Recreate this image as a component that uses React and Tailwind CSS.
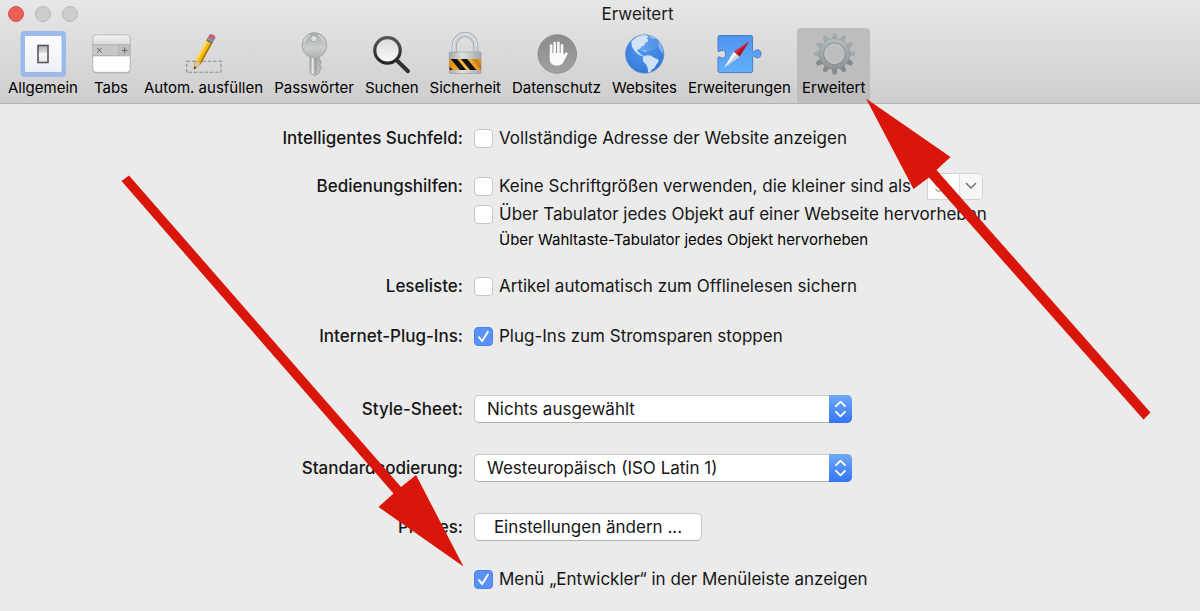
import React from "react";

const Svg = ({ children }) => (
  <svg viewBox="0 0 48 48" className="-mx-2 h-12 w-12 shrink-0" aria-hidden="true">
    {children}
  </svg>
);

const GeneralIcon = () => (
  <Svg>
    <defs>
      <linearGradient id="plate" x1="0" y1="0" x2="0" y2="1">
        <stop offset="0" stopColor="#fdfdff" />
        <stop offset="1" stopColor="#edf0f7" />
      </linearGradient>
      <linearGradient id="rocker" x1="0" y1="0" x2="0" y2="1">
        <stop offset="0" stopColor="#b4b4b6" />
        <stop offset="0.4" stopColor="#d8d8da" />
        <stop offset="0.45" stopColor="#fafafa" />
        <stop offset="1" stopColor="#e6e6e8" />
      </linearGradient>
    </defs>
    <rect x="1.5" y="1" width="45.5" height="46" rx="4" fill="#9bbaee" />
    <rect x="5.5" y="5.5" width="37.5" height="37" rx="1.5" fill="url(#plate)" stroke="#86a6dc" strokeWidth="0.6" />
    <rect x="19" y="15.5" width="10" height="17" fill="url(#rocker)" stroke="#58585b" strokeWidth="1.6" />
  </Svg>
);

const TabsIcon = () => (
  <Svg>
    <defs>
      <linearGradient id="tabTop" x1="0" y1="0" x2="0" y2="1">
        <stop offset="0" stopColor="#f4f4f4" />
        <stop offset="1" stopColor="#d9d9d9" />
      </linearGradient>
    </defs>
    <rect x="5.5" y="4.8" width="38" height="38.4" rx="4" fill="#a5a5a5" />
    <rect x="5.8" y="4.8" width="37.4" height="37.4" rx="3.6" fill="#fff" />
    <path d="M5.8 15V8.4a3.6 3.6 0 0 1 3.6-3.6h30.2a3.6 3.6 0 0 1 3.6 3.6V15z" fill="url(#tabTop)" />
    <rect x="5.8" y="14.6" width="37.4" height="11.4" fill="#c7c7c7" />
    <path d="M5.8 14.8h37.4M5.8 25.8h37.4M31.8 14.8v11" stroke="#a9a9a9" strokeWidth="0.9" />
    <rect x="32.3" y="15.2" width="10.9" height="10.2" fill="#bdbdbd" />
    <path d="M10.2 18l4.4 4.6M14.6 18l-4.4 4.6M34.6 20.4h6M37.6 17.4v6" stroke="#666" strokeWidth="1" />
    <rect x="5.8" y="4.8" width="37.4" height="37.6" rx="3.6" fill="none" stroke="#b3b3b3" strokeWidth="0.8" />
  </Svg>
);

const AutofillIcon = () => (
  <Svg>
    <rect x="6.7" y="31.3" width="34.3" height="11" fill="none" stroke="#8b8b8b" strokeWidth="1.1" strokeDasharray="3.4 1.9" />
    <g transform="translate(14 39.5) rotate(29)">
      <path d="M0 0L-3.3-8.5h6.6z" fill="#e9c48b" stroke="#8d6a32" strokeWidth="0.4" />
      <path d="M0 0l-1.1-2.9h2.2z" fill="#2a2522" />
      <path d="M-3.3-8.5v-23h6.6v23l-1.6-1.2L0-8.3l-1.7-1.4z" fill="#f4b91d" />
      <path d="M-3.3-8.5v-23h2v22z" fill="#ffdb58" />
      <path d="M3.3-8.5v-23H1.6v22z" fill="#a9760e" />
      <rect x="-3.4" y="-34.5" width="6.8" height="3.3" fill="#5f6c79" />
      <path d="M-3.4-33.4h6.8" stroke="#aeb9c3" strokeWidth="0.8" />
      <path d="M-3.4-34.5v-3a3.4 2.2 0 0 1 6.8 0v3z" fill="#b86b83" />
    </g>
  </Svg>
);

const KeyIcon = () => (
  <Svg>
    <defs>
      <linearGradient id="keyMetal" x1="0" y1="0" x2="0" y2="1">
        <stop offset="0" stopColor="#a6abac" />
        <stop offset="0.35" stopColor="#c9cdce" />
        <stop offset="0.6" stopColor="#a9aeaf" />
        <stop offset="1" stopColor="#c2c6c7" />
      </linearGradient>
    </defs>
    <path
      fillRule="evenodd"
      d="M24 2.6a12.8 12.8 0 0 1 5 24.6v2l2 1.5v3l-1.7 1.4 1.9 1.5v2.8l-1.9 1.4V43L25 45.8 20 43V27.2A12.8 12.8 0 0 1 24 2.6zM24 5.4a3.3 3.3 0 1 0 0 6.6 3.3 3.3 0 0 0 0-6.6z"
      fill="url(#keyMetal)"
      stroke="#92989a"
      strokeWidth="0.7"
    />
    <path d="M22.6 28v15.4" stroke="#eceeee" strokeWidth="1.6" />
    <path d="M25.8 28v16" stroke="#8b9091" strokeWidth="1" />
    <path d="M14 12a10.6 10.6 0 0 1 6-6.8M28 5.2a10.6 10.6 0 0 1 6 6.8" stroke="#dfe2e3" strokeWidth="1.2" fill="none" />
  </Svg>
);

const SearchIcon = () => (
  <Svg>
    <defs>
      <linearGradient id="lens" x1="0" y1="0" x2="0" y2="1">
        <stop offset="0" stopColor="#d9d9d9" />
        <stop offset="1" stopColor="#fbfbfb" />
      </linearGradient>
      <linearGradient id="rim" x1="0" y1="0" x2="0" y2="1">
        <stop offset="0" stopColor="#575757" />
        <stop offset="1" stopColor="#232323" />
      </linearGradient>
    </defs>
    <path d="M28.5 30L40 41.2" stroke="#303030" strokeWidth="4" strokeLinecap="round" />
    <circle cx="19.5" cy="20.4" r="12.7" fill="url(#lens)" stroke="url(#rim)" strokeWidth="3.2" />
  </Svg>
);

const LockIcon = () => (
  <Svg>
    <defs>
      <linearGradient id="lockBody" x1="0" y1="0" x2="1" y2="0">
        <stop offset="0" stopColor="#a3a9ac" />
        <stop offset="0.4" stopColor="#dde1e2" />
        <stop offset="1" stopColor="#a4aaad" />
      </linearGradient>
      <linearGradient id="lockBand" x1="0" y1="0" x2="1" y2="0">
        <stop offset="0" stopColor="#df8c18" />
        <stop offset="0.5" stopColor="#ffb544" />
        <stop offset="1" stopColor="#df8c18" />
      </linearGradient>
      <clipPath id="lockClip">
        <rect x="8.5" y="29" width="31.5" height="11" />
      </clipPath>
    </defs>
    <path d="M13.2 23v-6.5a10.8 12 0 0 1 21.6 0V23" fill="none" stroke="#9ba2a6" strokeWidth="5" />
    <path d="M13.2 23v-6.5a10.8 12 0 0 1 21.6 0V23" fill="none" stroke="#ccd2d5" strokeWidth="3.6" />
    <path d="M12.2 23v-6.5a11.8 12.7 0 0 1 23.6 0" fill="none" stroke="#edf0f1" strokeWidth="0.9" />
    <rect x="8.3" y="22" width="31.8" height="21.5" rx="1.2" fill="url(#lockBody)" stroke="#929a9e" strokeWidth="0.6" />
    <rect x="8.5" y="29" width="31.5" height="11" fill="url(#lockBand)" />
    <g clipPath="url(#lockClip)" fill="#111">
      <path d="M9.7 29h6.3l9.2 11h-6.3z" />
      <path d="M19.9 29h6.3l9.2 11h-6.3z" />
      <path d="M8.5 36.5l3 3.5h-3z" />
      <path d="M30.5 29h5l4.5 5.4v5.6z" opacity="0.15" />
    </g>
  </Svg>
);

const PrivacyIcon = () => (
  <Svg>
    <defs>
      <linearGradient id="disc" x1="0" y1="0" x2="0" y2="1">
        <stop offset="0" stopColor="#8b8b8b" />
        <stop offset="1" stopColor="#a1a1a1" />
      </linearGradient>
    </defs>
    <circle cx="24.3" cy="24" r="19.3" fill="url(#disc)" stroke="#828282" strokeWidth="0.7" />
    <g fill="none" stroke="#fafafa" strokeWidth="2.6" strokeLinecap="round">
      <path d="M18.1 15.5v11M21.7 13v12M25.4 12.8v12M29 15.2v11" />
    </g>
    <path
      d="M16.8 23v6c0 4 2.2 6.6 7.3 6.6 3.8 0 5.8-2.2 7-4.8l3.4-6.5c.8-1.6-1.2-2.8-2.3-1.4l-1.9 2.3V23z"
      fill="#fafafa"
    />
  </Svg>
);

const GlobeIcon = () => (
  <Svg>
    <defs>
      <radialGradient id="sea" cx="0.45" cy="0.4" r="0.7">
        <stop offset="0" stopColor="#4b95ee" />
        <stop offset="0.7" stopColor="#3c80df" />
        <stop offset="1" stopColor="#2c67c4" />
      </radialGradient>
      <clipPath id="globeClip">
        <circle cx="23.7" cy="24" r="19" />
      </clipPath>
    </defs>
    <circle cx="23.7" cy="24" r="19.2" fill="url(#sea)" stroke="#5688ce" strokeWidth="0.6" />
    <g clipPath="url(#globeClip)" fill="#cfe1f5">
      <path d="M10.5 11.5l5-4.4 5.5-2 4.8.2 2 1.7-2.2 1.3 2 1.8-1.7 2.3-1.9.2-.2 2.3-3.3 1.8-1.7 2.3-2.3.3.2 2.5 2.2 1.1 1.3 1.8 1.8.8-.3.9-2.5-.8-3-2-2.4-2.3-2.6-4-.7-4.4z" />
      <path d="M27.8 5.2l4.5 1 2.7 2.1-2.4.7-3.3-1.5z" opacity="0.6" />
      <path d="M37.5 11l2.6 2.8 2.2 5.4-.6 4.2-2.3-2.3-1.9-4.3z" opacity="0.5" />
      <path d="M22.500 26l3.800-.8 4 .5 3.200 2.300 3.700 1.300.3 2.500-2.200 2.800-1.800 3.400-2.800 1.800-1.700 3.100-1.900.3-.3-4.400-1.200-3.600-3.200-3.400-.7-3.200z" />
      <path d="M21 20l3.200.5 2 1.200-2-.2z" />
    </g>
    <ellipse cx="23.5" cy="13.5" rx="14" ry="8.5" fill="#fff" opacity="0.12" />
  </Svg>
);

const ExtensionsIcon = () => (
  <Svg>
    <defs>
      <linearGradient id="piece" x1="0" y1="0" x2="0" y2="1">
        <stop offset="0" stopColor="#4f94ef" />
        <stop offset="1" stopColor="#62b0fa" />
      </linearGradient>
    </defs>
    <path
      d="M4.8 5.5h31a1.8 1.8 0 0 1 1.8 1.8v13.6c.4.8 1.2.8 2 .2 2.5-2.5 6.4-1.3 6.4 2.7s-3.9 5.2-6.4 2.7c-.8-.6-1.6-.6-2 .2v14.1a1.8 1.8 0 0 1-1.8 1.8h-31A1.8 1.8 0 0 1 3 40.8V27.5c.4-.9 1.2-.9 2-.3 2.6 2 5.6.7 5.6-3s-3-5-5.6-3c-.8.6-1.6.6-2-.3V7.3a1.8 1.8 0 0 1 1.8-1.8z"
      fill="url(#piece)"
      stroke="#3f75bd"
      strokeWidth="0.9"
    />
    <path d="M34.200 11.300L18.800 21.700l5.600 5z" fill="#d92531" />
    <path d="M34.200 11.300L21.600 24.200l2.800 2.500z" fill="#a9141f" />
    <path d="M9 37.800l9.800-16.100 5.600 5z" fill="#f7f9fb" />
    <path d="M9 37.800L21.600 24.200l2.800 2.500z" fill="#c9d2da" />
  </Svg>
);

const TEETH = [0, 30, 60, 90, 120, 150, 180, 210, 240, 270, 300, 330];

const GearIcon = () => (
  <Svg>
    <defs>
      <linearGradient id="gear" gradientUnits="userSpaceOnUse" x1="0" y1="-20" x2="0" y2="20">
        <stop offset="0" stopColor="#bcc3c7" />
        <stop offset="0.5" stopColor="#a0a8ac" />
        <stop offset="1" stopColor="#868e93" />
      </linearGradient>
    </defs>
    <g transform="translate(24.5 23.8)">
      {TEETH.map((a) => (
        <path key={a} d="M-3-14l1.2-6.6h3.6l1.2 6.6z" fill={a > 90 && a < 270 ? "#81898e" : "#a3abaf"} transform={`rotate(${a})`} />
      ))}
      <circle r="12.6" fill="none" stroke="url(#gear)" strokeWidth="6" />
      <circle r="15.4" fill="none" stroke="#858d92" strokeWidth="0.5" />
      <circle r="10.8" fill="none" stroke="#858d91" strokeWidth="0.9" />
      <circle r="9.7" fill="none" stroke="#c6cbcd" strokeWidth="1" />
    </g>
  </Svg>
);

const TABS = [
  ["Allgemein", GeneralIcon],
  ["Tabs", TabsIcon],
  ["Autom. ausfüllen", AutofillIcon],
  ["Passwörter", KeyIcon],
  ["Suchen", SearchIcon],
  ["Sicherheit", LockIcon],
  ["Datenschutz", PrivacyIcon],
  ["Websites", GlobeIcon],
  ["Erweiterungen", ExtensionsIcon],
  ["Erweitert", GearIcon],
];

function Toolbar() {
  return (
    <header className="border-b border-[#b3b3b3] bg-linear-to-b from-[#e7e7e7] to-[#cecece]">
      <div className="flex h-7 items-center">
        <div className="flex w-[75px] gap-[11px] pl-2">
          <button aria-label="Schließen" className="size-4 shrink-0 rounded-full border border-[#d8504b] bg-[#ec5f59]" />
          <button aria-label="Minimieren" className="size-4 shrink-0 rounded-full border border-[#b9b9b9] bg-[#cdcdcd]" />
          <button aria-label="Zoomen" className="size-4 shrink-0 rounded-full border border-[#b9b9b9] bg-[#cdcdcd]" />
        </div>
        <h1 className="flex-1 text-center text-[17px] leading-6 text-[#1c1c1c]">Erweitert</h1>
      </div>
      <nav className="flex gap-px pl-[3px]">
        {TABS.map(([name, Icon]) => (
          <button
            key={name}
            aria-pressed={name === "Erweitert"}
            className="flex min-w-[54px] flex-col items-center rounded-t px-[5px] pt-0.5 pb-[5px] text-[15px] leading-5 whitespace-nowrap aria-pressed:bg-[#bdbdbd]"
          >
            <Icon />
            {name}
          </button>
        ))}
      </nav>
    </header>
  );
}

function Check({ id, checked, children }) {
  return (
    <div className="flex items-center gap-1.5">
      <span className="grid shrink-0">
        <input
          id={id}
          type="checkbox"
          defaultChecked={checked}
          className="peer col-start-1 row-start-1 size-[19px] appearance-none rounded border border-[#c6c6c6] bg-white checked:border-[#4b82ee] checked:bg-[#5a91f7]"
        />
        <svg viewBox="0 0 19 19" className="pointer-events-none invisible col-start-1 row-start-1 size-[19px] peer-checked:visible" aria-hidden="true">
          <path d="M5 10.2l3.2 3.9 5.7-9.4" fill="none" stroke="#fff" strokeWidth="1.9" strokeLinecap="round" strokeLinejoin="round" />
        </svg>
      </span>
      <label htmlFor={id} className="whitespace-nowrap">{children}</label>
    </div>
  );
}

function Popup({ id, value }) {
  return (
    <div className="relative w-[378px]">
      <select
        id={id}
        defaultValue={value}
        className="block h-7 w-full appearance-none rounded-[5px] border border-[#c9c9c9] border-b-[#b0b0b0] bg-white pr-8 pl-3"
      >
        <option>{value}</option>
      </select>
      <span className="pointer-events-none absolute inset-y-0 right-0 flex w-[23px] items-center justify-center rounded-r-[5px] bg-linear-to-b from-[#6fa9f7] to-[#3474f5]">
        <svg viewBox="0 0 23 28" className="h-7 w-[23px]" fill="none" stroke="#fff" strokeWidth="1.9" strokeLinecap="round" strokeLinejoin="round" aria-hidden="true">
          <path d="M7 11.2l4.5-4.5 4.5 4.5M7 16.8l4.5 4.5 4.5-4.5" />
        </svg>
      </span>
    </div>
  );
}

function Row({ label, htmlFor, className, children }) {
  return (
    <div className={`grid grid-cols-[463fr_726fr] items-center gap-x-[11px] ${className}`}>
      {label ? (
        <label htmlFor={htmlFor} className="text-right font-medium whitespace-nowrap">{label}</label>
      ) : (
        <span />
      )}
      <div className="flex items-center">{children}</div>
    </div>
  );
}

export default function App() {
  return (
    <div className="relative min-h-screen overflow-hidden bg-[#ebebeb] font-[Inter,'Liberation_Sans',sans-serif] text-black">
      <Toolbar />
      <main className="pt-5 pb-4 text-[17px] leading-6 text-[#161616]">
        <Row label="Intelligentes Suchfeld:" htmlFor="address" className="h-7">
          <Check id="address">Vollständige Adresse der Website anzeigen</Check>
        </Row>
        <Row label="Bedienungshilfen:" htmlFor="minsize" className="mt-5 h-7">
          <Check id="minsize">Keine Schriftgrößen verwenden, die kleiner sind als</Check>
          <div className="ml-4 flex h-[27px] w-[56px] overflow-hidden rounded-r-[5px] border border-[#d2d2d2] bg-white">
            <input aria-label="Schriftgröße" defaultValue="9" disabled className="w-[31px] pl-1.5 text-[#b5b5b5]" />
            <button aria-label="Größe wählen" className="flex flex-1 items-center justify-center border-l border-[#dedede] bg-[#f6f6f6]">
              <svg viewBox="0 0 12 8" className="h-2 w-3" fill="none" stroke="#777" strokeWidth="1.7" strokeLinecap="round" strokeLinejoin="round" aria-hidden="true">
                <path d="M1.5 1.5L6 6l4.5-4.5" />
              </svg>
            </button>
          </div>
        </Row>
        <Row className="h-7">
          <Check id="tabfocus">Über Tabulator jedes Objekt auf einer Webseite hervorheben</Check>
        </Row>
        <Row className="h-6">
          <p className="pl-[25px] text-[15px] whitespace-nowrap text-black">Über Wahltaste-Tabulator jedes Objekt hervorheben</p>
        </Row>
        <Row label="Leseliste:" htmlFor="offline" className="mt-5 h-7">
          <Check id="offline">Artikel automatisch zum Offlinelesen sichern</Check>
        </Row>
        <Row label="Internet-Plug-Ins:" htmlFor="plugins" className="mt-[22px] h-7">
          <Check id="plugins" checked>Plug-Ins zum Stromsparen stoppen</Check>
        </Row>
        <Row label="Style-Sheet:" htmlFor="stylesheet" className="mt-[45px] h-7">
          <Popup id="stylesheet" value="Nichts ausgewählt" />
        </Row>
        <Row label="Standardcodierung:" htmlFor="encoding" className="mt-[31px] h-7">
          <Popup id="encoding" value="Westeuropäisch (ISO Latin 1)" />
        </Row>
        <Row label="Proxies:" htmlFor="proxies" className="mt-[31px] h-7">
          <button id="proxies" className="h-7 w-[228px] rounded-[5px] border border-[#c9c9c9] border-b-[#b0b0b0] bg-white">
            Einstellungen ändern ...
          </button>
        </Row>
        <Row className="mt-6 h-7">
          <Check id="devmenu" checked>Menü „Entwickler“ in der Menüleiste anzeigen</Check>
        </Row>
      </main>
      <svg viewBox="0 0 1200 611" className="pointer-events-none absolute top-0 left-0 h-[611px] w-[1200px] max-w-none" fill="#da1509" aria-hidden="true">
        <path d="M129 175.5L401 487l15-12 47.5 91.5L378.5 507l15-13.5L121.5 181z" />
        <path d="M866 98.5l84.5 58.5-14 13 214 242.5-7 7L929 177.5 913.5 189z" />
      </svg>
    </div>
  );
}
